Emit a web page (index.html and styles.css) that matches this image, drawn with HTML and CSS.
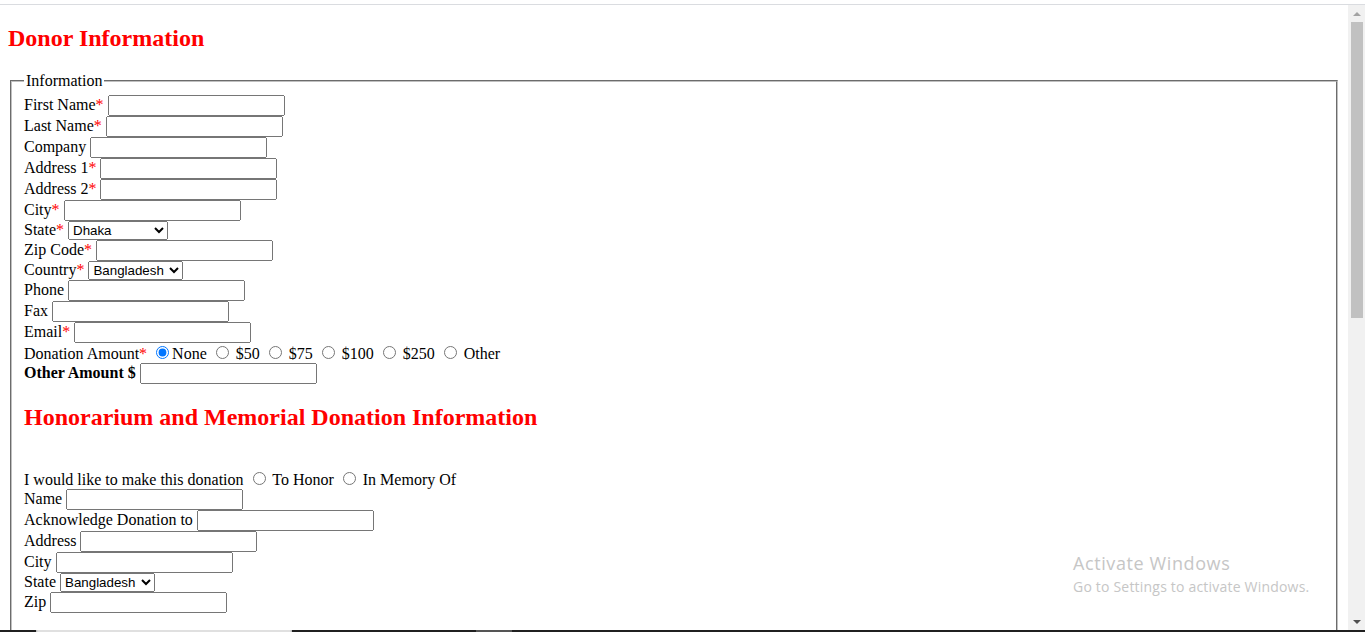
FILE: index.html
```html
<!DOCTYPE html>
<html lang="en">
<head>
<meta charset="utf-8">
<title>Donor Information</title>
<link rel="stylesheet" href="styles.css">
</head>
<body>
<div class="screen">
  <div class="browser-top"></div>
  <div class="viewport">
    <main class="page">
      <h2 class="title">Donor Information</h2>
      <form class="donor-form">
        <fieldset class="info">
          <legend>Information</legend>
          First Name<span class="req">*</span> <input class="field" type="text"><br>
          Last Name<span class="req">*</span> <input class="field" type="text"><br>
          Company <input class="field" type="text"><br>
          Address 1<span class="req">*</span> <input class="field" type="text"><br>
          Address 2<span class="req">*</span> <input class="field" type="text"><br>
          City<span class="req">*</span> <input class="field" type="text"><br>
          State<span class="req">*</span> <select class="select select-state"><option>Dhaka</option><option>Chattogram</option><option>Khulna</option><option>Rajshahi</option><option>Sylhet</option></select><br>
          Zip Code<span class="req">*</span> <input class="field" type="text"><br>
          Country<span class="req">*</span> <select class="select select-country"><option>Bangladesh</option><option>India</option><option>Nepal</option></select><br>
          Phone <input class="field" type="text"><br>
          Fax <input class="field" type="text"><br>
          Email<span class="req">*</span> <input class="field" type="email"><br>
          Donation Amount<span class="req">*</span> <input class="radio" type="radio" name="amount" checked>None <input class="radio" type="radio" name="amount"> $50 <input class="radio" type="radio" name="amount"> $75 <input class="radio" type="radio" name="amount"> $100 <input class="radio" type="radio" name="amount"> $250 <input class="radio" type="radio" name="amount"> Other<br>
          <b>Other Amount $</b> <input class="field" type="text"><br>
          <h2 class="title">Honorarium and Memorial Donation Information</h2>
          <br>
          I would like to make this donation <input class="radio" type="radio" name="honor"> To Honor <input class="radio" type="radio" name="honor"> In Memory Of<br>
          Name <input class="field" type="text"><br>
          Acknowledge Donation to <input class="field" type="text"><br>
          Address <input class="field" type="text"><br>
          City <input class="field" type="text"><br>
          State <select class="select select-country"><option>Bangladesh</option><option>India</option><option>Nepal</option></select><br>
          Zip <input class="field" type="text"><br>
        </fieldset>
      </form>
    </main>
    <div class="scrollbar">
      <div class="sb-btn"><span class="arrow-up"></span></div>
      <div class="sb-track"><div class="sb-thumb"></div></div>
      <div class="sb-btn"><span class="arrow-down"></span></div>
    </div>
  </div>
  <div class="taskbar"></div>
  <div class="watermark">
    <span class="wm-title">Activate Windows</span>
    <span class="wm-sub">Go to Settings to activate Windows.</span>
  </div>
</div>
</body>
</html>
```

FILE: styles.css
```css
html, body {
  margin: 0;
  padding: 0;
  background: #ffffff;
  overflow: hidden;
}

body {
  font-family: "Liberation Serif", "Times New Roman", serif;
  font-size: 16px;
  color: #000000;
}

.screen {
  position: relative;
  width: 1365px;
  height: 632px;
  display: flex;
  flex-direction: column;
  overflow: hidden;
}

.browser-top {
  flex: none;
  height: 4px;
  border-bottom: 1px solid #dadce0;
  background: #ffffff;
}

.viewport {
  flex: 1;
  min-height: 0;
  display: flex;
  overflow: hidden;
}

.page {
  flex: 1;
  min-width: 0;
  padding: 0 8px;
}

.title {
  color: #ff0000;
  font-size: 24px;
  font-weight: bold;
  margin: 19.92px 0;
}

.donor-form {
  margin: 0;
}

.info {
  margin: 0 2px;
  padding: 0.35em 0.75em 0.625em;
  border: 2px groove rgb(192, 192, 192);
  min-width: min-content;
  min-height: 1100px;
}

.info legend {
  padding: 0 2px;
}

.req {
  color: #ff0000;
}

.field {
  font: 13.333px "Liberation Sans", Arial, sans-serif;
  width: 177px;
  height: 21px;
  box-sizing: border-box;
}

.select {
  font: 13.333px "Liberation Sans", Arial, sans-serif;
  height: 19px;
  box-sizing: border-box;
}

.select-state {
  width: 100px;
}

.select-country {
  width: 95px;
}

.scrollbar {
  flex: none;
  width: 17px;
  background: #f1f1f1;
  display: flex;
  flex-direction: column;
}

.sb-btn {
  flex: none;
  height: 17px;
  display: flex;
  align-items: center;
  justify-content: center;
}

.arrow-up {
  width: 0;
  height: 0;
  border-left: 4px solid transparent;
  border-right: 4px solid transparent;
  border-bottom: 4px solid #a3a3a3;
}

.arrow-down {
  width: 0;
  height: 0;
  border-left: 4px solid transparent;
  border-right: 4px solid transparent;
  border-top: 4px solid #505050;
}

.sb-track {
  flex: 1;
  padding: 0 2px 0 3px;
}

.sb-thumb {
  height: 296px;
  background: #c1c1c1;
}

.taskbar {
  flex: none;
  height: 2px;
  background: linear-gradient(to right,
    #202020 0, #202020 36px,
    #b5b5b5 36px, #e0e0e0 38px, #e0e0e0 290px, #b5b5b5 292px,
    #202020 292px, #202020 476px,
    #555555 476px, #555555 512px,
    #202020 512px, #202020 100%);
}

.watermark {
  position: absolute;
  left: 1073px;
  top: 552px;
  color: #c6c6c6;
  font-family: "Open Sans", "Noto Sans", sans-serif;
  pointer-events: none;
}

.wm-title {
  display: block;
  font-size: 18px;
  line-height: 22px;
  letter-spacing: 0.6px;
}

.wm-sub {
  display: block;
  font-size: 14px;
  line-height: 25px;
  letter-spacing: 0.2px;
}
```
